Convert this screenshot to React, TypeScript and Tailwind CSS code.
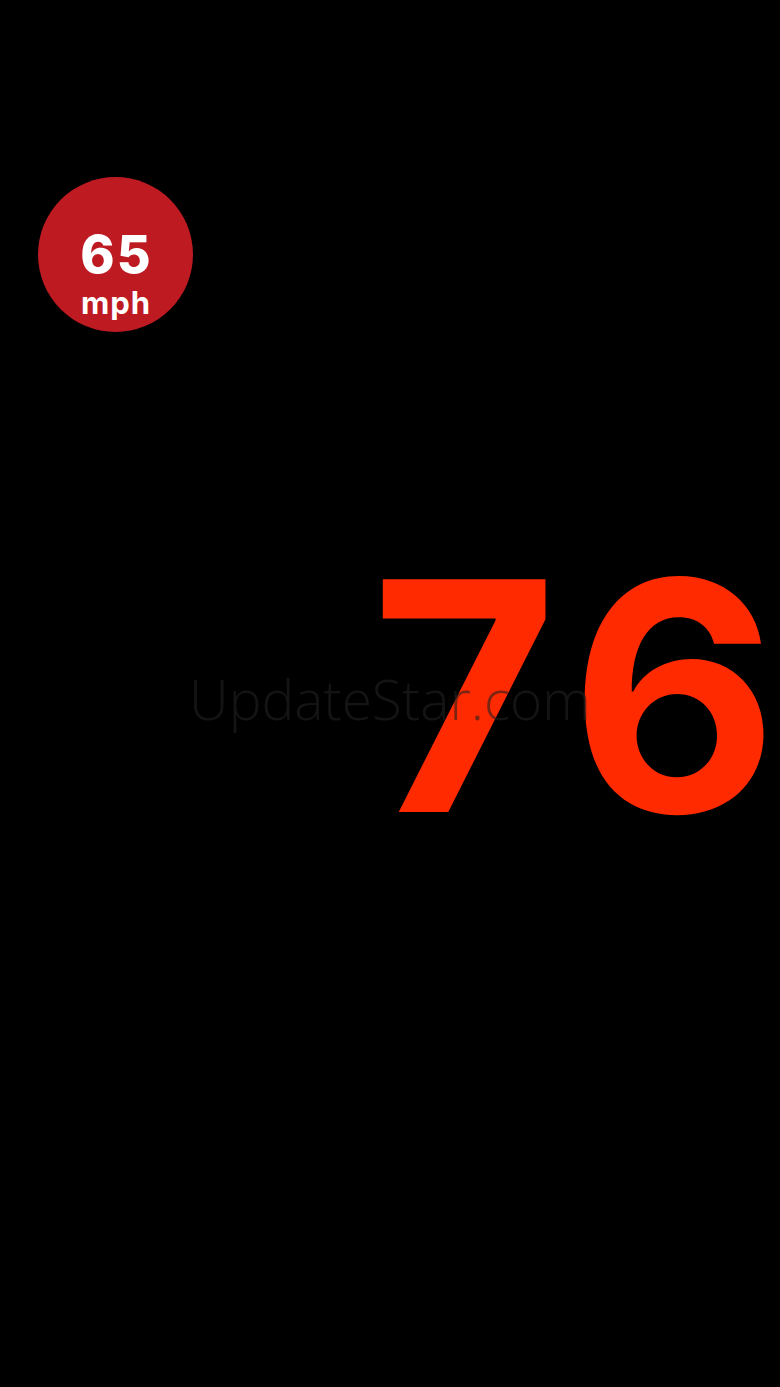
export default function App() {
  return (
    <div className="relative h-[1387px] w-[780px] overflow-hidden bg-black font-['Inter','Liberation_Sans',sans-serif]">
      <div className="pl-[38px] pt-[177px]">
        <div className="flex h-[155px] w-[155px] flex-col items-center rounded-full bg-[#be1a22] pt-[52px] text-white">
          <span className="ml-[2px] text-[52px] font-extrabold leading-[52px] tracking-[2px]">65</span>
          <span className="mt-[7px] ml-[1px] text-[31px] font-bold leading-[30px] tracking-[1px]">mph</span>
        </div>
      </div>
      <div className="mt-[214px] flex justify-end">
        <span className="mr-[-16px] text-[320px] font-bold leading-[300px] tracking-[18px] text-[#ff2a00]">76</span>
      </div>
      <div className="pointer-events-none absolute left-0 top-[664px] w-full text-center font-['Open_Sans',sans-serif] text-[55px] font-light leading-[70px] text-[rgba(34,34,34,0.6)]">
        UpdateStar.com
      </div>
    </div>
  );
}
